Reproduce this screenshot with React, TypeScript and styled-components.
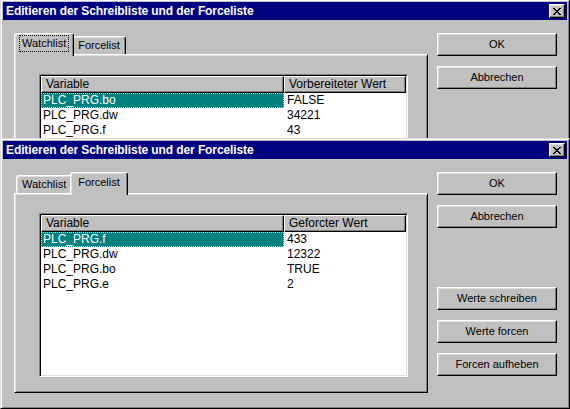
import React from "react";
import styled, { createGlobalStyle } from "styled-components";

const GlobalStyle = createGlobalStyle`
  html, body {
    margin: 0;
    padding: 0;
    background: #c0c0c0;
  }
  body {
    font-family: "Liberation Sans", Arial, sans-serif;
  }
`;

const Desktop = styled.div`
  position: relative;
  width: 570px;
  height: 409px;
  overflow: hidden;
  background: #c0c0c0;
`;

const Window = styled.div<{ $top: number }>`
  position: absolute;
  left: 0;
  top: ${(p) => p.$top}px;
  width: 570px;
  height: 271px;
  box-sizing: border-box;
  display: flex;
  flex-direction: column;
  padding: 2px;
  background: #c0c0c0;
  border: 1px solid;
  border-color: #dfdfdf #000 #000 #dfdfdf;
  box-shadow: inset 1px 1px #fff, inset -1px -1px #808080;
`;

const TitleBar = styled.div`
  height: 18px;
  flex: none;
  display: flex;
  align-items: center;
  justify-content: space-between;
  padding: 0 2px 0 3px;
  background: #000080;
  color: #fff;
  font-size: 12px;
  font-weight: bold;
  letter-spacing: -0.1px;
  white-space: nowrap;
`;

const CloseButton = styled.div`
  width: 16px;
  height: 14px;
  box-sizing: border-box;
  display: flex;
  align-items: center;
  justify-content: center;
  background: #c0c0c0;
  border: 1px solid;
  border-color: #fff #000 #000 #fff;
  box-shadow: inset -1px -1px #808080, inset 1px 1px #dfdfdf;
`;

const Body = styled.div`
  display: flex;
  gap: 9px;
  padding: 13px 0 0 11px;
`;

const TabArea = styled.div`
  width: 414px;
  display: flex;
  flex-direction: column;
`;

const TabStrip = styled.div`
  height: 21px;
  display: flex;
  align-items: flex-end;
  padding-left: 2px;
  position: relative;
  z-index: 1;
`;

const Tab = styled.div<{ $active?: boolean }>`
  box-sizing: border-box;
  height: ${(p) => (p.$active ? 23 : 18)}px;
  margin: 0 ${(p) => (p.$active ? -2 : 0)}px ${(p) => (p.$active ? -2 : 0)}px;
  padding: ${(p) => (p.$active ? "3px 6px 0" : "2px 4px 0")};
  position: relative;
  z-index: ${(p) => (p.$active ? 2 : 1)};
  background: #c0c0c0;
  border: 1px solid;
  border-bottom: none;
  border-color: #fff #000 #000 #fff;
  border-radius: 3px 3px 0 0;
  box-shadow: inset -1px 0 #808080, inset 1px 1px #dfdfdf;
  font-size: 11px;
  line-height: 13px;
  color: #000;
  white-space: nowrap;
`;

const TabLabel = styled.span<{ $focused?: boolean }>`
  display: inline-block;
  padding: 0 1px;
  outline: ${(p) => (p.$focused ? "1px dotted #000" : "none")};
  outline-offset: 1px;
`;

const Panel = styled.div`
  height: 200px;
  box-sizing: border-box;
  padding: 19px 0 0 24px;
  background: #c0c0c0;
  border: 1px solid;
  border-color: #fff #000 #000 #fff;
  box-shadow: inset 1px 1px #dfdfdf, inset -1px -1px #808080;
`;

const ListBox = styled.div`
  width: 369px;
  height: 164px;
  box-sizing: border-box;
  padding: 1px;
  background: #fff;
  border: 1px solid;
  border-color: #808080 #fff #fff #808080;
  box-shadow: inset 1px 1px #000, inset -1px -1px #dfdfdf;
  overflow: hidden;
`;

const HeaderRow = styled.div`
  display: grid;
  grid-template-columns: 243px 122px;
`;

const HeaderCell = styled.div`
  height: 17px;
  box-sizing: border-box;
  padding-left: 4px;
  background: #c0c0c0;
  border: 1px solid;
  border-color: #fff #000 #000 #fff;
  box-shadow: inset -1px -1px #808080;
  font-size: 12px;
  line-height: 15px;
  color: #000;
  white-space: nowrap;
  overflow: hidden;
`;

const Row = styled.div`
  display: grid;
  grid-template-columns: 243px 122px;
  height: 15px;
  font-size: 12px;
  line-height: 15px;
  color: #000;
`;

const NameCell = styled.div<{ $selected?: boolean }>`
  padding-left: 2px;
  background: ${(p) => (p.$selected ? "#008080" : "transparent")};
  color: ${(p) => (p.$selected ? "#fff" : "#000")};
  outline: ${(p) => (p.$selected ? "1px dotted #b0e0e0" : "none")};
  outline-offset: -1px;
`;

const ValueCell = styled.div`
  padding-left: 3px;
`;

const ButtonColumn = styled.div`
  width: 120px;
  display: flex;
  flex-direction: column;
  gap: 10px;
`;

const ButtonGroup = styled.div<{ $gapAbove?: number }>`
  display: flex;
  flex-direction: column;
  gap: 10px;
  margin-top: ${(p) => p.$gapAbove ?? 0}px;
`;

const Button = styled.div`
  width: 120px;
  height: 23px;
  box-sizing: border-box;
  display: flex;
  align-items: center;
  justify-content: center;
  background: #c0c0c0;
  border: 1px solid;
  border-color: #fff #000 #000 #fff;
  box-shadow: inset -1px -1px #808080, inset 1px 1px #dfdfdf;
  font-size: 11px;
  color: #000;
  padding-bottom: 1px;
`;

function CloseGlyph() {
  const px: [number, number, number][] = [
    [0, 0, 2], [6, 0, 2],
    [1, 1, 2], [5, 1, 2],
    [2, 2, 4],
    [3, 3, 2],
    [2, 4, 4],
    [1, 5, 2], [5, 5, 2],
    [0, 6, 2], [6, 6, 2],
  ];
  return (
    <svg width="8" height="7" viewBox="0 0 8 7" shapeRendering="crispEdges">
      {px.map(([x, y, w], i) => (
        <rect key={i} x={x} y={y} width={w} height={1} fill="#000" />
      ))}
    </svg>
  );
}

type Entry = { name: string; value: string };

interface DialogProps {
  top: number;
  active: "watch" | "force";
  column: string;
  entries: Entry[];
  extraButtons?: boolean;
}

function Dialog({ top, active, column, entries, extraButtons }: DialogProps) {
  return (
    <Window $top={top}>
      <TitleBar>
        <span>Editieren der Schreibliste und der Forceliste</span>
        <CloseButton>
          <CloseGlyph />
        </CloseButton>
      </TitleBar>
      <Body>
        <TabArea>
          <TabStrip>
            <Tab $active={active === "watch"}>
              <TabLabel $focused={active === "watch"}>Watchlist</TabLabel>
            </Tab>
            <Tab $active={active === "force"}>
              <TabLabel>Forcelist</TabLabel>
            </Tab>
          </TabStrip>
          <Panel>
            <ListBox>
              <HeaderRow>
                <HeaderCell>Variable</HeaderCell>
                <HeaderCell>{column}</HeaderCell>
              </HeaderRow>
              {entries.map((e, i) => (
                <Row key={e.name}>
                  <NameCell $selected={i === 0}>{e.name}</NameCell>
                  <ValueCell>{e.value}</ValueCell>
                </Row>
              ))}
            </ListBox>
          </Panel>
        </TabArea>
        <ButtonColumn>
          <Button>OK</Button>
          <Button>Abbrechen</Button>
          {extraButtons && (
            <ButtonGroup $gapAbove={49}>
              <Button>Werte schreiben</Button>
              <Button>Werte forcen</Button>
              <Button>Forcen aufheben</Button>
            </ButtonGroup>
          )}
        </ButtonColumn>
      </Body>
    </Window>
  );
}

// the back dialog is mostly hidden, so it only carries what peeks out
const watchEntries: Entry[] = [
  { name: "PLC_PRG.bo", value: "FALSE" },
  { name: "PLC_PRG.dw", value: "34221" },
  { name: "PLC_PRG.f", value: "43" },
];

const forceEntries: Entry[] = [
  { name: "PLC_PRG.f", value: "433" },
  { name: "PLC_PRG.dw", value: "12322" },
  { name: "PLC_PRG.bo", value: "TRUE" },
  { name: "PLC_PRG.e", value: "2" },
];

export default function App() {
  return (
    <>
      <GlobalStyle />
      <Desktop>
        <Dialog top={-1} active="watch" column="Vorbereiteter Wert" entries={watchEntries} />
        <Dialog top={138} active="force" column="Geforcter Wert" entries={forceEntries} extraButtons />
      </Desktop>
    </>
  );
}
